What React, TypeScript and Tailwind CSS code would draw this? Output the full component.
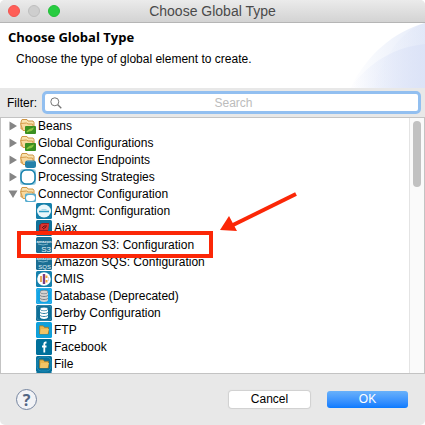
import type { ReactNode } from "react";

const FOLDER = "M1.500 13.500V2.500h5l1.500 2h5.500v9z";

function Folder({ children }: { children: ReactNode }) {
  return (
    <svg viewBox="0 0 16 16" className="size-4 shrink-0 overflow-visible" aria-hidden="true">
      <path d="M1 11V4L2 1.500h5l1 1.500h5l1 1.500V11z" fill="#f9e3b0" stroke="#cf9646" />
      <path d="M0.500 5.500L3 12.500h11.500L12.500 6H8L6.500 5z" fill="#f8d9a0" stroke="#d59a49" />
      {children}
    </svg>
  );
}

function GreenFolder() {
  return (
    <Folder>
      <rect x="5" y="8" width="11" height="8" rx="1" fill="#3b8f20" />
      <path d="M6.500 13.500c3-3 4-3 7.500-4-1 3-3 4-5 4l-2 1z" fill="#8cc63f" />
    </Folder>
  );
}

function EndpointFolder() {
  return (
    <Folder>
      <rect x="5" y="8.500" width="11" height="7.500" rx="2.500" fill="#2480a9" />
      <path d="M7 9.500h7" stroke="#4796b8" />
    </Folder>
  );
}

function ConnectorFolder() {
  return (
    <Folder>
      <rect x="5" y="7.500" width="11" height="8.500" rx="1.500" fill="#58add0" />
      <rect x="6" y="9" width="9" height="6" rx="3" fill="#fff" />
    </Folder>
  );
}

function StrategyIcon() {
  return (
    <svg viewBox="0 0 16 16" className="size-4 shrink-0" aria-hidden="true">
      <rect x="0" y="0" width="16" height="16" rx="3" fill="#9fcfe2" />
      <rect x="1" y="1" width="14" height="14" rx="5" fill="#fff" stroke="#1681ad" strokeWidth="1.500" />
    </svg>
  );
}

function Tile({ color, children }: { color: string; children?: ReactNode }) {
  return (
    <svg viewBox="0 0 16 16" className="size-4 shrink-0" aria-hidden="true">
      <rect width="16" height="16" rx="1.500" fill={color} />
      {children}
    </svg>
  );
}

function AmgmtIcon() {
  return (
    <Tile color="#1580ab">
      <ellipse cx="8" cy="8" rx="7" ry="6.500" fill="#e8f6fb" />
      <path d="M3 8.500h10" stroke="#2c9bc4" strokeWidth="1.500" />
      <path d="M5.500 6.500h5" stroke="#a9d8e9" />
    </Tile>
  );
}

function AjaxIcon() {
  return (
    <Tile color="#117199">
      <path d="M3 5l3-2 7 0-1 8-3 2-6-1z" fill="#9d1e20" />
      <path d="M5 4h8l-1 6H4z" fill="#db3432" />
      <path d="M6 8l2-2h3M7 9l3-2" stroke="#661315" fill="none" />
    </Tile>
  );
}

function AmazonIcon({ label }: { label: string }) {
  return (
    <Tile color="#1b6f94">
      <text x="8" y="6" textAnchor="middle" fontSize="4" fontWeight="bold" fill="#e8f5fa" className="font-['Liberation_Sans',sans-serif]">amazon</text>
      <path d="M2 7q5 2 10 0" stroke="#8fc3d7" fill="none" strokeWidth="0.800" />
      <text x="15" y="14.500" textAnchor="end" fontSize={label === "S3" ? 8 : 6} fill="#e4f3f9" className="font-['Liberation_Sans',sans-serif]">{label}</text>
    </Tile>
  );
}

function CmisIcon() {
  return (
    <Tile color="#1681ad">
      <circle cx="8" cy="8" r="6.800" fill="#fff" />
      <path d="M5 5v6" stroke="#e9a95c" strokeWidth="2" />
      <path d="M8 3v10" stroke="#773c85" strokeWidth="2.400" />
      <path d="M10.500 4.500v2.500M10.500 9v2.500" stroke="#f1a63d" strokeWidth="2" />
      <path d="M12.500 6v4" stroke="#d4d8e9" />
    </Tile>
  );
}

function Cylinder({ tile, body, line }: { tile: string; body: string; line: string }) {
  return (
    <Tile color={tile}>
      <rect x="0.500" y="0.500" width="15" height="15" rx="4" fill="none" stroke="#ffffff55" strokeWidth="0.500" />
      <path d="M4 4v8c0 2.500 8 2.500 8 0V4" fill={body} />
      <ellipse cx="8" cy="4" rx="4" ry="1.800" fill={body} stroke={line} strokeWidth="0.700" />
      <path d="M4 7c0 2 8 2 8 0M4 10c0 2 8 2 8 0" fill="none" stroke={line} />
    </Tile>
  );
}

function FolderTile({ color }: { color: string }) {
  return (
    <Tile color={color}>
      <rect x="1" y="1" width="14" height="14" rx="4.500" fill="none" stroke="#2b9bc7" strokeWidth="0.700" />
      <path d={FOLDER} transform="translate(2.500 2) scale(.74)" fill="#ebb64d" stroke="#8e712d" />
      <path d="M5 7h8l-1.500 5H4z" fill="#f2c466" />
    </Tile>
  );
}

function FacebookIcon() {
  return (
    <Tile color="#00709b">
      <path d="M10.500 3.500H9.800Q8.300 3.500 8.300 5v8.500M6 7.500h4.500" fill="none" stroke="#fff" strokeWidth="1.800" />
    </Tile>
  );
}

const groups = [
  { label: "Beans", icon: <GreenFolder /> },
  { label: "Global Configurations", icon: <GreenFolder /> },
  { label: "Connector Endpoints", icon: <EndpointFolder /> },
  { label: "Processing Strategies", icon: <StrategyIcon /> },
  { label: "Connector Configuration", icon: <ConnectorFolder />, open: true },
];

const connectors = [
  { label: "AMgmt: Configuration", icon: <AmgmtIcon /> },
  { label: "Ajax", icon: <AjaxIcon /> },
  { label: "Amazon S3: Configuration", icon: <AmazonIcon label="S3" /> },
  { label: "Amazon SQS: Configuration", icon: <AmazonIcon label="SQS" /> },
  { label: "CMIS", icon: <CmisIcon /> },
  { label: "Database (Deprecated)", icon: <Cylinder tile="#11a4e5" body="#d5d2d0" line="#76818a" /> },
  { label: "Derby Configuration", icon: <Cylinder tile="#0c6e97" body="#ffffff" line="#3183a5" /> },
  { label: "FTP", icon: <FolderTile color="#09a2df" /> },
  { label: "Facebook", icon: <FacebookIcon /> },
  { label: "File", icon: <FolderTile color="#08719b" /> },
];

function Disclosure({ open }: { open?: boolean }) {
  return (
    <svg viewBox="0 0 10 10" className="size-[10px] shrink-0" aria-hidden="true">
      <path d={open ? "M0.500 1.500h9L5 9z" : "M1.500 0.500v9L9 5z"} fill="#858585" />
    </svg>
  );
}

function TitleBar() {
  return (
    <div className="grid h-[23px] grid-cols-[64px_1fr_64px] items-center border-b border-[#b5b5b5] bg-linear-to-b from-[#ebebeb] to-[#d3d3d3] px-2">
      <div className="flex gap-2">
        <button aria-label="Close" className="size-3 rounded-full border border-[#f05550] bg-[#ff5f58]" />
        <button aria-label="Minimize" className="size-3 rounded-full border border-[#bebebe] bg-[#cecece]" />
        <button aria-label="Zoom" className="size-3 rounded-full border border-[#20bd37] bg-[#27cc40]" />
      </div>
      <div className="text-center text-sm leading-4 whitespace-nowrap text-[#4a4a4a]">Choose Global Type</div>
    </div>
  );
}

function Header() {
  return (
    <header className="relative h-[65px] bg-white px-2 pt-[5px]">
      <svg viewBox="0 0 75 65" className="absolute right-0 bottom-0 h-[65px] w-[75px]" aria-hidden="true">
        <defs>
          <linearGradient id="outer">
            <stop offset="0" stopColor="#fff" />
            <stop offset="1" stopColor="#e5ebf9" />
          </linearGradient>
          <linearGradient id="inner">
            <stop offset="0" stopColor="#e4eafa" stopOpacity="0" />
            <stop offset="1" stopColor="#dce3f7" />
          </linearGradient>
        </defs>
        <path d="M0 65C18 31 43 9 75 0v65z" fill="url(#outer)" />
        <path d="M22 65C35 34 49 8 75 0v65z" fill="url(#inner)" opacity=".4" />
        <path d="M0 65C20 38 46 24 75 21v44z" fill="url(#inner)" />
      </svg>
      <h1 className="relative font-['Open_Sans','Noto_Sans',sans-serif] text-[13px] leading-[18px] font-bold">Choose Global Type</h1>
      <p className="relative mt-[5px] pl-2 text-xs leading-4">Choose the type of global element to create.</p>
    </header>
  );
}

export default function App() {
  return (
    <main className="flex h-screen flex-col overflow-hidden rounded-[5px] bg-[#e8e8e8] font-['Liberation_Sans',Arial,sans-serif] text-xs text-black">
      <TitleBar />
      <Header />
      <div className="flex h-[29px] items-center pr-1 pl-[7px]">
        <label htmlFor="filter" className="w-[35px] shrink-0 whitespace-nowrap">Filter:</label>
        <div className="relative flex-1">
          <input
            id="filter"
            type="text"
            placeholder="Search"
            className="block h-[23px] w-full rounded-[5px] border-[3px] border-[#92bff0] bg-white pr-5 pl-6 text-center leading-[17px] outline-none placeholder:text-[#bcbcbc]"
          />
          <svg viewBox="0 0 12 12" className="absolute top-[6px] left-2 size-3" fill="none" stroke="#757575" aria-hidden="true">
            <circle cx="4.800" cy="4.800" r="4" />
            <path d="M7.800 7.800l3.500 3.500" strokeWidth="1.300" />
          </svg>
        </div>
      </div>
      <section className="flex min-h-0 flex-1 border border-[#c3c3c3] bg-white">
        <div className="relative min-w-0 flex-1 overflow-hidden">
          <ul aria-label="Global element types" className="-mt-px">
            {groups.map((group) => (
              <li key={group.label}>
                <button aria-expanded={!!group.open} className="flex h-[17px] w-full items-center gap-[2px] pl-[7px] text-left whitespace-nowrap">
                  <Disclosure open={group.open} />
                  {group.icon}
                  <span>{group.label}</span>
                </button>
                {group.open && (
                  <ul>
                    {connectors.map((item) => (
                      <li key={item.label}>
                        <button className="flex h-[17px] w-full items-center gap-[2px] pl-[35px] text-left whitespace-nowrap">
                          {item.icon}
                          <span>{item.label}</span>
                        </button>
                      </li>
                    ))}
                    <li className="pl-[35px]">
                      <Tile color="#08719b" />
                    </li>
                  </ul>
                )}
              </li>
            ))}
          </ul>
          <div className="pointer-events-none absolute top-[113px] left-4 h-[27px] w-[196px] border-4 border-[#fb2707]" />
          <svg viewBox="0 0 80 42" className="pointer-events-none absolute top-[73px] left-[218px] h-[42px] w-[80px]" aria-hidden="true">
            <path d="M77 3L14 34" stroke="#fb2707" strokeWidth="4" />
            <path d="M1 39L10 25L18 40z" fill="#fb2707" />
          </svg>
        </div>
        <div className="w-[15px] border-l border-[#e4e4e4] bg-[#fafafa] px-[3px] pt-[3px]">
          <div className="h-[66px] w-2 rounded-full bg-[#c1c1c1]" />
        </div>
      </section>
      <footer className="flex h-[51px] items-center justify-between pr-[17px] pl-4">
        <button aria-label="Help" className="flex size-[21px] items-center justify-center rounded-full border border-[#7585a0] bg-[#f2f3f6] font-['Open_Sans',sans-serif] text-base leading-4 font-bold text-[#526583]">?</button>
        <div className="flex gap-[17px]">
          <button className="h-[17px] w-[81px] rounded-[3px] bg-white leading-[17px] shadow-[0_0_1px_1px_#d0d0d0]">Cancel</button>
          <button className="h-[17px] w-[81px] rounded-[3px] bg-linear-to-b from-[#68b1fa] to-[#087aff] leading-[17px] text-white">OK</button>
        </div>
      </footer>
    </main>
  );
}
